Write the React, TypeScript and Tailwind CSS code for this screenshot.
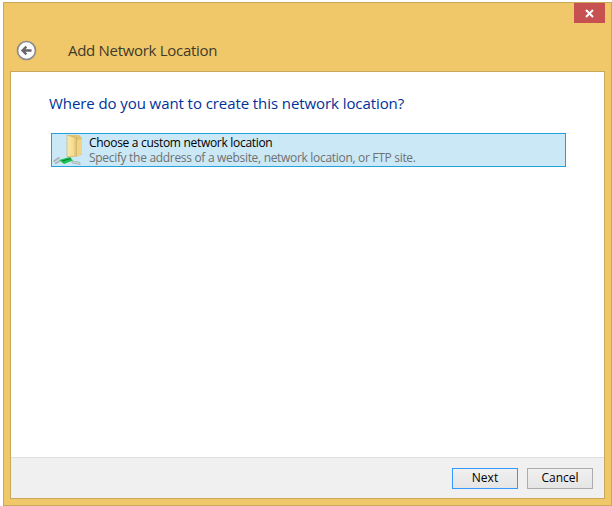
const uiFont = "font-['Open_Sans','Noto_Sans',sans-serif]";

function BackIcon() {
  return (
    <svg width="21" height="21" viewBox="0 0 21 21" className="shrink-0 mt-[2px]">
      <circle cx="10.5" cy="10.5" r="9" fill="#fdfdfd" stroke="#8b8b90" strokeWidth="1.7" />
      <path d="M15.5 10.5H7M10.4 6.6 6.5 10.5l3.9 3.9" fill="none" stroke="#66666c" strokeWidth="2.3" />
    </svg>
  );
}

function FolderIcon() {
  return (
    <svg width="32" height="32" viewBox="0 0 32 32" className="shrink-0">
      <defs>
        <linearGradient id="fold" x1="0" y1="0" x2="1" y2="0">
          <stop offset="0" stopColor="#f7e9b0" />
          <stop offset="0.6" stopColor="#f6dd90" />
          <stop offset="1" stopColor="#dcb968" />
        </linearGradient>
      </defs>
      <path d="M16 1h11l3 3v17l-14 2z" fill="#e3c374" />
      <path d="M15 1l10 3v18l-10 1z" fill="url(#fold)" stroke="#c9a75a" strokeWidth="0.6" />
      <path d="M25 6l5-1v15l-5 3z" fill="#edd488" />
      <path d="M1.5 27.5l6-4M3 29.5l5-2.5" fill="none" stroke="#aab0b3" strokeWidth="1.6" />
      <path d="M20 27l8 1.5v2L20 29z" fill="#cfd4d6" stroke="#a9afb2" strokeWidth="0.8" />
      <path d="M7 26l11-3 3 3.5-9 3.5z" fill="#1cc24f" />
      <path d="M10 27l9-2.5" stroke="#0c7a2c" strokeWidth="1" />
    </svg>
  );
}

export default function App() {
  return (
    <div className={`w-[612px] h-[506px] bg-white pt-[2px] pl-[3px] ${uiFont}`}>
      <div className="w-[609px] h-[504px] bg-[#f0c869] border border-[#c9a859] flex flex-col">
        <div className="h-[20px] flex justify-end pr-[6px] shrink-0">
          <button className="w-[31px] h-[20px] bg-[#c75050] flex items-center justify-center">
            <svg width="9" height="9" viewBox="0 0 9 9">
              <path d="M1 1l7 7M8 1 1 8" stroke="#fff" strokeWidth="2" />
            </svg>
          </button>
        </div>
        <div className="h-[48px] flex items-center pl-[12px] pt-[5px] shrink-0">
          <BackIcon />
          <span className="ml-[31px] text-[15px] leading-[20px] text-[#3f3a2b] tracking-[-0.3px]">Add Network Location</span>
        </div>
        <div className="flex-1 mx-[6px] mb-[6px] bg-white border border-[#c9a859] flex flex-col min-h-0">
          <div className="flex-1 pt-[20px] px-[38px]">
            <h1 className="text-[15px] leading-[22px] text-[#003399] font-normal tracking-[-0.08px]">Where do you want to create this network location?</h1>
            <div className="mt-[19px] ml-[2px] h-[34px] bg-[#cbe8f6] border border-[#26a0da] flex items-center">
              <FolderIcon />
              <div className="ml-[5px] -mt-[1px]">
                <div className="text-[12px] leading-[15px] text-black tracking-[-0.3px]">Choose a custom network location</div>
                <div className="text-[12px] leading-[15px] text-[#707070] tracking-[-0.31px]">Specify the address of a website, network location, or FTP site.</div>
              </div>
            </div>
          </div>
          <div className="h-[41px] bg-[#f0f0f0] border-t border-[#dfdfdf] flex items-center justify-end gap-[9px] pr-[11px] shrink-0">
            <button className="w-[66px] h-[21px] border border-[#3399ff] bg-gradient-to-b from-[#f0f0f0] to-[#e5e5e5] text-[12px] leading-[18px] text-black">Next</button>
            <button className="w-[66px] h-[21px] border border-[#acacac] bg-gradient-to-b from-[#f0f0f0] to-[#e5e5e5] text-[12px] leading-[18px] text-black">Cancel</button>
          </div>
        </div>
      </div>
    </div>
  );
}
